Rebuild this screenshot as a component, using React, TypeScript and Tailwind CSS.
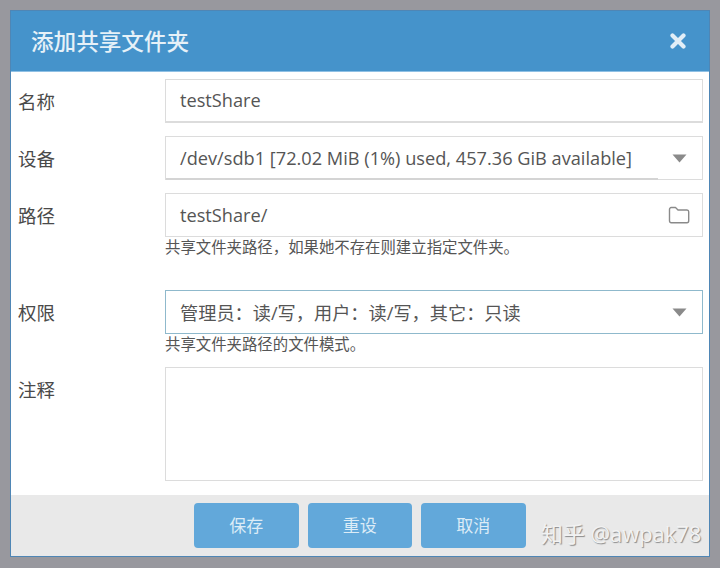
import React from "react";

const font = { fontFamily: '"Open Sans", "Noto Sans CJK SC", sans-serif' };

function Caret() {
  return (
    <svg width="15" height="9" viewBox="0 0 15 9" className="shrink-0">
      <path d="M0.5 0.5H14.5L7.5 8.5Z" fill="#8a8a8a" />
    </svg>
  );
}

function Row({ label, children, className = "" }: { label: string; children: React.ReactNode; className?: string }) {
  return (
    <div className={`flex ${className}`}>
      <div className="w-[147px] shrink-0 pt-[9px] text-[18.5px] leading-[28px] text-[#4a4a4a]">{label}</div>
      <div className="flex-1 min-w-0">{children}</div>
    </div>
  );
}

export default function App() {
  return (
    <div className="relative h-[568px] w-[720px] overflow-hidden bg-[#98989e] pl-[10px] pr-[10px] pt-[10px]" style={font}>
      <div className="flex h-[547px] w-[700px] flex-col border border-[#4f86b5] bg-white">
        <div className="flex h-[61px] shrink-0 items-center justify-between bg-[#4593cb] border-b border-[#8fc0e4] pl-[20px] pr-[23px]">
          <span className="pt-[2px] text-[22.6px] font-medium text-[#e6f1f8]">添加共享文件夹</span>
          <svg width="16" height="16" viewBox="0 0 16 16">
            <path d="M2.5 2.5L13.5 13.5M13.5 2.5L2.5 13.5" stroke="#e2eef7" strokeWidth="4.2" strokeLinecap="round" />
          </svg>
        </div>

        <div className="flex flex-1 flex-col gap-[13px] pl-[7px] pr-[6px] pt-[7px]">
          <Row label="名称">
            <div className="flex h-[44px] items-center border border-[#dcdcdc] border-b-2 pl-[14px] text-[18.2px] text-[#555555]">testShare</div>
          </Row>
          <Row label="设备">
            <div className="relative flex h-[44px] items-center justify-between border border-[#dcdcdc] pl-[14px] pr-[15px] text-[18.2px] text-[#555555]">
              <span className="whitespace-nowrap pt-[2px]">/dev/sdb1 [72.02 MiB (1%) used, 457.36 GiB available]</span>
              <Caret />
              <div className="absolute bottom-[-1px] left-0 h-[2px] w-[492px] bg-[#d4d4d4]" />
            </div>
          </Row>
          <Row label="路径" className="mb-[20px]">
            <div className="flex h-[44px] items-center justify-between border border-[#dcdcdc] pl-[14px] pr-[12px] text-[18.2px] text-[#555555]">
              <span className="pt-[2px]">testShare/</span>
              <svg width="22" height="18" viewBox="0 0 22 18" fill="none" stroke="#8a8a8a" strokeWidth="1.4" strokeLinejoin="round">
                <path d="M1.5 3.5C1.5 2.4 2.2 1.5 3.2 1.5H7.5L10 4H19C20 4 20.7 4.8 20.7 5.8V14.8C20.7 15.9 20 16.7 19 16.7H3.2C2.2 16.7 1.5 15.9 1.5 14.8Z" />
              </svg>
            </div>
            <div className="h-[20px] pt-[1px] text-[15.4px] leading-[20px] text-[#555555]">共享文件夹路径，如果她不存在则建立指定文件夹。</div>
          </Row>
          <Row label="权限">
            <div className="flex h-[44px] items-center justify-between border border-[#8fb9cc] pl-[14px] pr-[15px] text-[18.2px] text-[#555555]">
              <span className="pt-[3px]">管理员：读/写，用户：读/写，其它：只读</span>
              <Caret />
            </div>
            <div className="h-[20px] pt-[1px] text-[15.4px] leading-[20px] text-[#555555]">共享文件夹路径的文件模式。</div>
          </Row>
          <Row label="注释">
            <div className="h-[114px] border border-[#dcdcdc]" />
          </Row>
        </div>

        <div className="flex h-[61px] shrink-0 items-start gap-[9px] bg-[#e9e9e9] pl-[183px] pt-[8px]">
          {["保存", "重设", "取消"].map((t) => (
            <div key={t} className="flex h-[45px] w-[104.5px] items-center justify-center rounded-[4px] bg-[#62a8da] text-[17px] text-[#dcecf7]">
              {t}
            </div>
          ))}
        </div>
      </div>
      <div className="absolute left-[541px] top-[520px] text-[21.9px] leading-[28px] whitespace-nowrap text-[#f2f2f2] [text-shadow:1px_1px_1px_#8a8a8a]">知乎 @awpak78</div>
    </div>
  );
}
